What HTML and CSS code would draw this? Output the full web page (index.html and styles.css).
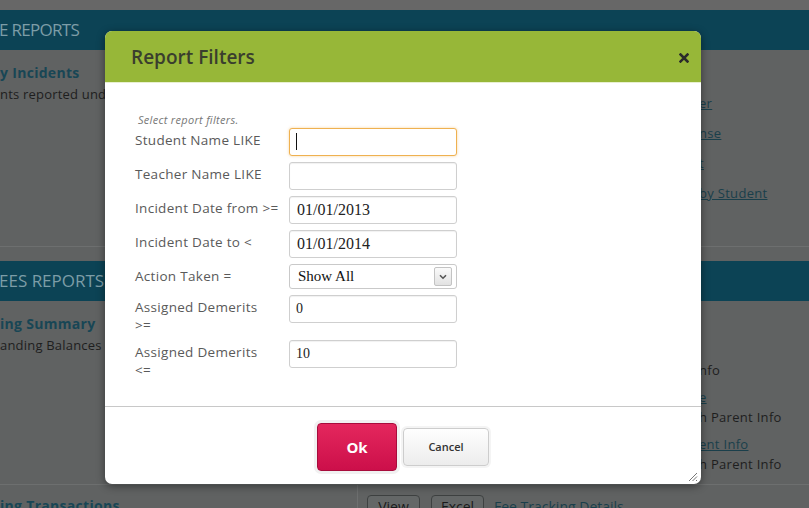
FILE: index.html
```html
<!DOCTYPE html>
<html lang="en">
<head>
<meta charset="utf-8">
<title>Report Filters</title>
<link rel="stylesheet" href="styles.css">
</head>
<body>
<div class="page">
  <div class="topstrip"></div>

  <section class="report">
    <h2 class="report-head head-one">E REPORTS</h2>
    <div class="report-body body-one">
      <div class="col-left">
        <a class="report-title">y Incidents</a>
        <p class="report-desc">nts reported under the selected filters</p>
      </div>
      <div class="col-right links-one">
        <a class="rlink">er</a>
        <a class="rlink">nse</a>
        <a class="rlink">t</a>
        <a class="rlink">by Student</a>
      </div>
    </div>
  </section>

  <section class="report">
    <h2 class="report-head">EES REPORTS</h2>
    <div class="report-body body-two">
      <div class="col-left">
        <a class="report-title">ing Summary</a>
        <p class="report-desc">anding Balances</p>
      </div>
      <div class="col-right links-two">
        <div class="pair"><span class="rdesc">nfo</span></div>
        <div class="pair"><a class="rlink">e</a><span class="rdesc">h Parent Info</span></div>
        <div class="pair"><a class="rlink">ent Info</a><span class="rdesc">h Parent Info</span></div>
      </div>
    </div>
    <div class="report-row">
      <div class="col-left row-left">
        <a class="report-title">ing Transactions</a>
      </div>
      <div class="row-right">
        <span class="mini-btn">View</span>
        <span class="mini-btn">Excel</span>
        <a class="row-link">Fee Tracking Details</a>
      </div>
    </div>
  </section>
</div>

<div class="modal">
  <div class="modal-head">
    <h1 class="modal-title">Report Filters</h1>
    <svg class="close" width="10" height="10" viewBox="0 0 10 10"><path d="M1.5 1.5 L8.5 8.5 M8.5 1.5 L1.5 8.5" stroke="#2b2b2b" stroke-width="2.5" stroke-linecap="square"/></svg>
  </div>
  <div class="modal-body">
    <p class="hint">Select report filters.</p>
    <div class="form">
      <label class="lbl">Student Name LIKE</label>
      <div class="field focused"><input class="inp" type="text" value=""><span class="caret"></span></div>

      <label class="lbl">Teacher Name LIKE</label>
      <div class="field"><input class="inp" type="text" value=""></div>

      <label class="lbl">Incident Date from &gt;=</label>
      <div class="field"><input class="inp date" type="text" value="01/01/2013"></div>

      <label class="lbl">Incident Date to &lt;</label>
      <div class="field"><input class="inp date" type="text" value="01/01/2014"></div>

      <label class="lbl">Action Taken =</label>
      <div class="select">
        <span class="select-val">Show All</span>
        <span class="select-arrow"><svg width="8" height="6" viewBox="0 0 8 6"><path d="M1 1.2 L4 4.2 L7 1.2" fill="none" stroke="#555" stroke-width="1.6"/></svg></span>
      </div>

      <label class="lbl">Assigned Demerits<br>&gt;=</label>
      <div class="field"><input class="inp small" type="text" value="0"></div>

      <label class="lbl">Assigned Demerits<br>&lt;=</label>
      <div class="field"><input class="inp small" type="text" value="10"></div>
    </div>
  </div>
  <div class="modal-foot">
    <button class="btn btn-ok">Ok</button>
    <button class="btn btn-cancel">Cancel</button>
    <svg class="grip" width="12" height="12" viewBox="0 0 12 12"><path d="M11 3 L3 11 M11 6.5 L6.5 11 M11 10 L10 11" stroke="#777" stroke-width="1"/></svg>
  </div>
</div>
</body>
</html>
```

FILE: styles.css
```css
html, body {
  margin: 0;
  padding: 0;
}
body {
  width: 809px;
  height: 508px;
  overflow: hidden;
  background: #606262;
  font-family: "Open Sans", "Liberation Sans", sans-serif;
  position: relative;
}
.page {
  width: 809px;
}
.topstrip {
  height: 10px;
  background: #676767;
}
.report-head {
  margin: 0;
  height: 40px;
  line-height: 40px;
  background: #0c4355;
  color: #7d9da7;
  font-size: 17px;
  font-weight: 400;
  padding-left: 0;
  text-indent: -1px;
  white-space: nowrap;
}
.head-one {
  letter-spacing: -0.7px;
}
.report-body {
  display: flex;
  border-bottom: 1px solid #6d6f6f;
}
.body-one {
  height: 196px;
  margin-bottom: 14px;
}
.body-two {
  height: 183px;
}
.col-left {
  width: 358px;
  padding-top: 14px;
  box-sizing: border-box;
  white-space: nowrap;
  overflow: hidden;
}
.report-title {
  display: block;
  font-size: 14px;
  font-weight: 700;
  line-height: 18px;
  color: #184655;
  letter-spacing: 0.3px;
}
.report-desc {
  margin: 3px 0 0;
  font-size: 13px;
  line-height: 18px;
  color: #1e1e1e;
  letter-spacing: 0.2px;
}
.col-right {
  padding-left: 341px;
  box-sizing: border-box;
  white-space: nowrap;
  display: flex;
  flex-direction: column;
  align-items: flex-start;
}
.links-one {
  padding-top: 44px;
  gap: 12px;
}
.rlink {
  font-size: 13px;
  line-height: 18px;
  color: #1a3f4b;
  text-decoration: underline;
  letter-spacing: 0.3px;
}
.rdesc {
  font-size: 13px;
  line-height: 18px;
  color: #1e1e1e;
  letter-spacing: 0.3px;
}
.links-two {
  padding-top: 60px;
  gap: 9px;
}
.pair {
  display: flex;
  flex-direction: column;
  align-items: flex-start;
  gap: 2px;
}
.report-row {
  display: flex;
  height: 40px;
}
.row-left {
  border-right: 1px solid #6d6f6f;
  padding-top: 12px;
}
.row-right {
  display: flex;
  align-items: flex-start;
  gap: 11px;
  padding: 10px 0 0 9px;
}
.mini-btn {
  display: inline-block;
  width: 53px;
  box-sizing: border-box;
  text-align: center;
  border: 1px solid #3e4141;
  border-radius: 4px;
  background: #646767;
  color: #1a1a1a;
  font-size: 14px;
  line-height: 22px;
}
.row-link {
  margin-left: -1px;
  font-size: 14px;
  line-height: 24px;
  color: #1a3f4b;
}

/* ---------- modal ---------- */
.modal {
  position: absolute;
  left: 105px;
  top: 31px;
  width: 596px;
  height: 453px;
  background: #fff;
  border-radius: 7px;
  box-shadow: 0 2px 8px rgba(0, 0, 0, 0.45);
  display: flex;
  flex-direction: column;
  overflow: hidden;
}
.modal-head {
  height: 52px;
  flex: none;
  background: #97b738;
  display: flex;
  align-items: center;
  justify-content: space-between;
  padding: 0 12px 0 26px;
  border-bottom: 1px solid #e8f0d0;
  box-sizing: border-box;
}
.modal-title {
  margin: 0;
  font-size: 19px;
  font-weight: 600;
  color: #3a3e2e;
}
.close {
  display: block;
  margin-top: 3px;
}
.modal-body {
  flex: 1;
  padding: 30px 0 0 30px;
}
.hint {
  margin: 0 0 1px 3px;
  font-size: 11px;
  line-height: 14px;
  font-style: italic;
  color: #777;
  letter-spacing: 0.3px;
}
.form {
  display: grid;
  grid-template-columns: 154px 168px;
  row-gap: 6px;
  align-items: start;
}
.lbl {
  padding-top: 3px;
  font-size: 13.5px;
  line-height: 18px;
  color: #5a5a5a;
  letter-spacing: 0.3px;
}
.field {
  position: relative;
}
.inp {
  display: block;
  width: 168px;
  height: 28px;
  box-sizing: border-box;
  border: 1px solid #cfcfcf;
  border-radius: 3px;
  box-shadow: inset 0 1px 1px rgba(0, 0, 0, 0.06);
  padding: 0 7px;
  font-family: "Liberation Serif", serif;
  font-size: 15px;
  color: #222;
  background: #fff;
  outline: none;
}
.inp.date {
  font-size: 16px;
}
.inp.small {
  font-size: 14px;
  padding-left: 6px;
}
.focused .inp {
  border-color: #efb150;
  box-shadow: 0 0 3px rgba(239, 177, 80, 0.55);
}
.caret {
  position: absolute;
  left: 7px;
  top: 5px;
  width: 1px;
  height: 17px;
  background: #111;
}
.select {
  width: 168px;
  height: 25px;
  box-sizing: border-box;
  border: 1px solid #c9c9c9;
  border-radius: 3px;
  display: flex;
  align-items: center;
  justify-content: space-between;
  padding: 0 4px 0 8px;
  background: #fff;
}
.select-val {
  font-family: "Liberation Serif", serif;
  font-size: 15px;
  color: #111;
}
.select-arrow {
  width: 18px;
  height: 19px;
  box-sizing: border-box;
  border: 1px solid #c3c3c3;
  border-radius: 2px;
  background: linear-gradient(#fafafa, #e2e2e2);
  display: flex;
  align-items: center;
  justify-content: center;
}
.modal-foot {
  position: relative;
  height: 78px;
  flex: none;
  border-top: 1px solid #c8c8c8;
  display: flex;
  align-items: center;
  justify-content: center;
  gap: 6px;
  padding-top: 2px;
  box-sizing: border-box;
}
.btn {
  font-family: "Open Sans", "Liberation Sans", sans-serif;
  border-radius: 4px;
  cursor: pointer;
}
.btn-ok {
  width: 80px;
  height: 48px;
  border: 1px solid #a80c3c;
  background: linear-gradient(#e4275d, #cc0f4a);
  color: #fff;
  font-size: 15px;
  font-weight: 700;
  box-shadow: 0 0 0 3px #f1f1f1;
}
.btn-cancel {
  width: 86px;
  height: 38px;
  border: 1px solid #cdcdcd;
  background: linear-gradient(#fefefe, #ececec);
  color: #333;
  font-size: 11px;
  font-weight: 600;
  box-shadow: 0 0 0 2px #f4f4f4;
}
.grip {
  position: absolute;
  right: 3px;
  bottom: 2px;
}
```
